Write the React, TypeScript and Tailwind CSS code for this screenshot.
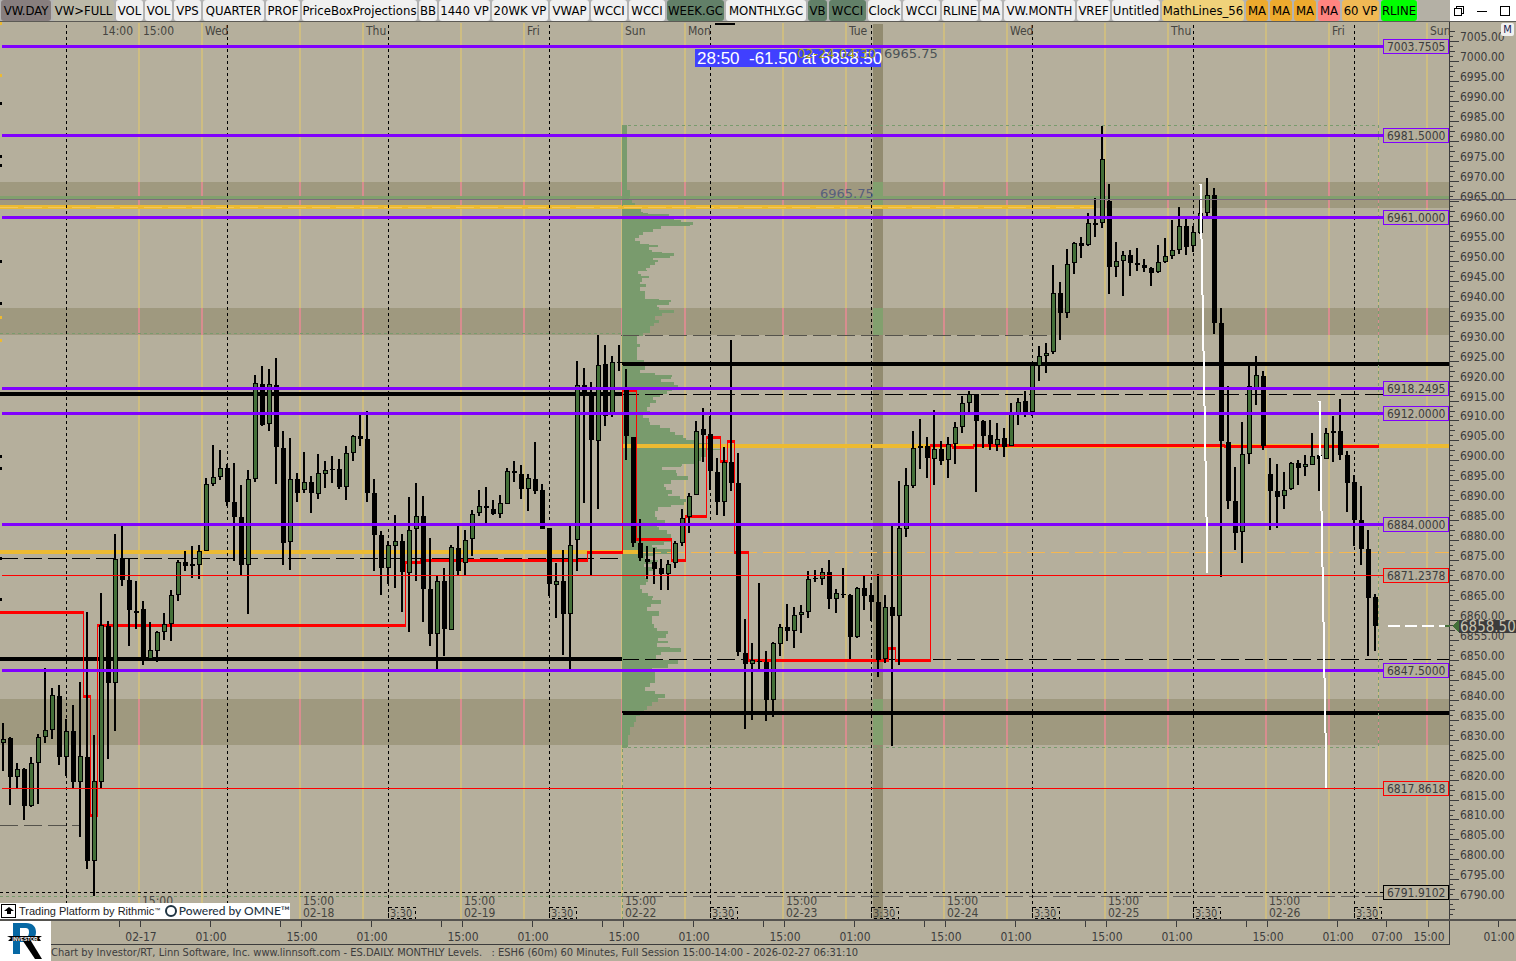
import classNames from "clsx";

const PLOT_RIGHT = 1449;
const DAY_WIDTH = 161;
const FONT = "font-['DejaVu_Sans_Condensed','DejaVu_Sans',sans-serif]";

interface Tab {
  name: string;
  width: string;
  color?: string;
}

const TABS: Tab[] = [
  { name: "VW.DAY", width: "w-[50px]", color: "bg-[#877e7e]" },
  { name: "VW>FULL", width: "w-[61px]", color: "bg-[#bbb9a8]" },
  { name: "VOL", width: "w-[27px]" },
  { name: "VOL", width: "w-[27px]" },
  { name: "VPS", width: "w-[27px]" },
  { name: "QUARTER", width: "w-[61px]" },
  { name: "PROF", width: "w-[34px]" },
  { name: "PriceBoxProjections", width: "w-[115px]" },
  { name: "BB", width: "w-[18px]" },
  { name: "1440 VP", width: "w-[51px]" },
  { name: "20WK VP", width: "w-[56px]" },
  { name: "VWAP", width: "w-[39px]" },
  { name: "WCCI", width: "w-[36px]" },
  { name: "WCCI", width: "w-[36px]" },
  { name: "WEEK.GC", width: "w-[57px]", color: "bg-[#628068]" },
  { name: "MONTHLY.GC", width: "w-[80px]" },
  { name: "VB", width: "w-[19px]", color: "bg-[#628068]" },
  { name: "WCCI", width: "w-[37px]", color: "bg-[#628068]" },
  { name: "Clock", width: "w-[33px]" },
  { name: "WCCI", width: "w-[37px]" },
  { name: "RLINE", width: "w-[36px]" },
  { name: "MA", width: "w-[22px]" },
  { name: "VW.MONTH", width: "w-[71px]" },
  { name: "VREF", width: "w-[33px]" },
  { name: "Untitled", width: "w-[48px]" },
  { name: "MathLines_56", width: "w-[82px]", color: "bg-[#f0d27a]" },
  { name: "MA", width: "w-[22px]", color: "bg-[#edaa2e]" },
  { name: "MA", width: "w-[22px]", color: "bg-[#edaa2e]" },
  { name: "MA", width: "w-[22px]", color: "bg-[#edaa2e]" },
  { name: "MA", width: "w-[22px]", color: "bg-[#ff8480]" },
  { name: "60 VP", width: "w-[37px]", color: "bg-[#f0b955]" },
  { name: "RLINE", width: "w-[36px]", color: "bg-[#00ff00]" },
];

// high, low, body top, body bottom, 1 when the bar closed up
const CANDLES = [
  [723, 771, 739, 743, 1], [737, 805, 738, 777, 0], [763, 788, 769, 777, 1], [768, 820, 769, 806, 0],
  [757, 807, 763, 806, 1], [734, 804, 737, 763, 1], [668, 743, 730, 737, 1], [688, 739, 695, 730, 1],
  [685, 765, 696, 757, 0], [719, 776, 731, 757, 1], [705, 788, 731, 782, 0], [682, 837, 756, 782, 1],
  [612, 869, 757, 861, 0], [735, 896, 781, 861, 1], [593, 788, 625, 782, 1], [621, 759, 626, 683, 0],
  [534, 731, 559, 683, 1], [525, 586, 558, 580, 0], [558, 646, 580, 610, 0], [581, 629, 611, 613, 0],
  [601, 665, 609, 660, 0], [622, 659, 650, 659, 1], [631, 662, 632, 651, 1], [613, 640, 624, 632, 1],
  [590, 641, 595, 624, 1], [560, 601, 562, 595, 1], [551, 571, 562, 566, 0], [546, 578, 564, 566, 0],
  [545, 579, 551, 565, 1], [478, 551, 484, 551, 1], [445, 486, 477, 484, 1], [450, 480, 468, 477, 1],
  [464, 506, 468, 502, 0], [463, 561, 502, 517, 0], [485, 575, 517, 565, 0], [470, 614, 479, 565, 1],
  [375, 482, 383, 479, 1], [366, 426, 384, 425, 0], [369, 431, 384, 424, 1], [358, 484, 385, 447, 0],
  [431, 565, 448, 543, 0], [438, 570, 479, 542, 1], [473, 502, 479, 493, 0], [452, 493, 482, 490, 1],
  [476, 513, 482, 493, 0], [454, 499, 473, 494, 1], [461, 488, 470, 474, 1], [456, 483, 469, 470, 0],
  [459, 489, 469, 487, 0], [446, 500, 453, 487, 1], [435, 461, 436, 453, 1], [414, 446, 436, 439, 0],
  [411, 502, 439, 493, 0], [479, 571, 493, 535, 0], [531, 595, 535, 568, 0], [541, 584, 545, 568, 1],
  [515, 588, 541, 546, 1], [534, 612, 541, 572, 0], [497, 632, 530, 573, 1], [483, 581, 516, 529, 1],
  [496, 622, 516, 589, 0], [538, 646, 589, 634, 0], [576, 669, 581, 634, 1], [568, 656, 581, 629, 0],
  [545, 630, 547, 630, 1], [525, 575, 548, 571, 0], [530, 575, 540, 563, 1], [510, 556, 514, 539, 1],
  [490, 516, 506, 513, 1], [487, 524, 506, 508, 0], [500, 515, 509, 514, 0], [495, 518, 503, 514, 1],
  [468, 504, 471, 504, 1], [461, 482, 471, 473, 0], [465, 499, 474, 489, 0], [474, 511, 478, 489, 1],
  [442, 494, 479, 491, 0], [484, 529, 490, 529, 0], [528, 596, 528, 584, 0], [563, 618, 581, 585, 1],
  [550, 655, 581, 614, 0], [525, 670, 545, 614, 1], [361, 571, 385, 540, 1], [368, 503, 385, 396, 0],
  [382, 576, 396, 440, 0], [335, 509, 365, 441, 1], [345, 426, 364, 416, 0], [356, 417, 362, 413, 1],
  [345, 371, 362, 363, 0], [369, 460, 389, 436, 0], [437, 547, 437, 543, 0], [519, 561, 543, 558, 0],
  [546, 579, 559, 562, 0], [548, 584, 562, 569, 0], [559, 590, 568, 574, 0], [560, 590, 564, 574, 1],
  [541, 568, 543, 563, 1], [509, 546, 518, 543, 1], [493, 533, 496, 517, 1], [421, 495, 431, 495, 1],
  [408, 462, 429, 435, 0], [416, 490, 434, 471, 0], [458, 515, 472, 502, 0], [447, 516, 462, 502, 1],
  [340, 491, 462, 483, 0], [453, 656, 483, 652, 0], [619, 729, 653, 664, 0], [643, 720, 660, 664, 1],
  [583, 670, 661, 662, 0], [651, 721, 662, 700, 0], [642, 717, 643, 700, 1], [624, 656, 627, 644, 1],
  [604, 641, 627, 631, 0], [607, 648, 615, 631, 1], [605, 633, 612, 615, 1], [571, 618, 579, 612, 1],
  [570, 582, 578, 579, 0], [568, 585, 572, 579, 1], [560, 609, 572, 599, 0], [589, 613, 593, 599, 1],
  [568, 598, 594, 595, 0], [594, 659, 595, 637, 0], [587, 638, 588, 637, 1], [576, 610, 588, 596, 0],
  [583, 621, 595, 602, 0], [574, 677, 602, 660, 0], [595, 663, 607, 659, 1], [525, 746, 607, 616, 0],
  [481, 665, 528, 616, 1], [468, 537, 485, 529, 1], [431, 488, 448, 486, 1], [419, 469, 446, 448, 0],
  [437, 478, 446, 458, 0], [410, 485, 449, 459, 1], [441, 465, 449, 461, 0], [437, 478, 444, 460, 1],
  [422, 464, 427, 444, 1], [396, 433, 403, 427, 1], [391, 414, 394, 403, 1], [394, 492, 394, 421, 0],
  [420, 448, 421, 436, 0], [420, 450, 435, 444, 0], [423, 451, 439, 445, 1], [428, 457, 438, 447, 0],
  [403, 446, 414, 446, 1], [398, 425, 402, 414, 1], [391, 417, 401, 412, 0], [363, 416, 365, 412, 1],
  [346, 381, 356, 366, 1], [343, 373, 353, 356, 1], [265, 354, 293, 352, 1], [282, 340, 293, 313, 0],
  [249, 318, 264, 313, 1], [242, 274, 243, 263, 1], [237, 258, 243, 246, 0], [213, 246, 223, 245, 1],
  [198, 237, 223, 225, 0], [126, 228, 159, 223, 1], [184, 294, 201, 267, 0], [242, 277, 261, 267, 1],
  [251, 296, 255, 261, 1], [250, 276, 255, 263, 0], [248, 271, 263, 265, 0], [259, 272, 265, 268, 0],
  [267, 286, 268, 273, 0], [245, 273, 262, 272, 1], [238, 263, 256, 262, 1], [220, 259, 250, 256, 1],
  [207, 254, 226, 250, 1], [219, 255, 226, 247, 0], [226, 252, 232, 246, 1], [200, 234, 213, 233, 1],
  [178, 216, 195, 213, 1], [188, 334, 195, 323, 0], [308, 577, 323, 441, 0], [386, 509, 442, 501, 0],
  [467, 550, 501, 533, 0], [422, 563, 454, 532, 1], [365, 464, 386, 454, 1], [356, 405, 375, 389, 1],
  [371, 450, 376, 446, 0], [458, 530, 474, 491, 0], [464, 528, 491, 497, 0], [472, 509, 490, 496, 1],
  [462, 490, 463, 489, 1], [460, 485, 463, 468, 0], [455, 476, 464, 467, 1], [433, 465, 456, 465, 1],
  [455, 491, 455, 459, 0], [428, 459, 433, 459, 1], [416, 462, 431, 433, 0], [399, 460, 431, 455, 0],
  [451, 512, 455, 483, 0], [475, 546, 482, 520, 0], [486, 565, 520, 549, 0], [530, 656, 549, 598, 0],
  [594, 651, 597, 626, 0],
];

// y, right edge of the volume profile
const PROFILE = [
  [125, 627], [189, 627], [190, 630], [198, 629], [200, 632], [203, 635], [207, 637], [209, 641], [212, 643],
  [213, 648], [214, 669], [216, 669], [217, 674], [220, 681], [222, 693], [224, 693], [225, 690], [226, 661],
  [229, 653], [232, 643], [235, 639], [238, 635], [241, 640], [244, 649], [245, 658], [246, 658], [247, 649],
  [250, 652], [252, 662], [253, 674], [255, 674], [256, 670], [258, 653], [260, 658], [262, 655], [265, 650],
  [268, 646], [270, 647], [271, 638], [274, 641], [276, 649], [278, 642], [282, 640], [284, 646], [287, 640],
  [291, 645], [297, 645], [299, 659], [300, 671], [302, 669], [305, 657], [307, 659], [310, 674], [311, 674],
  [313, 662], [316, 655], [320, 659], [323, 654], [326, 650], [330, 650], [333, 643], [336, 637], [342, 637],
  [344, 640], [347, 637], [355, 637], [360, 644], [365, 645], [370, 640], [373, 655], [375, 672], [377, 671],
  [379, 661], [382, 674], [385, 678], [389, 672], [391, 667], [394, 660], [397, 653], [400, 656], [403, 650],
  [407, 647], [411, 650], [415, 643], [418, 649], [422, 650], [425, 660], [428, 670], [432, 675], [435, 683],
  [438, 686], [440, 695], [443, 712], [449, 720], [450, 706], [454, 706], [457, 701], [461, 699], [464, 682],
  [466, 681], [467, 662], [470, 676], [473, 677], [476, 688], [478, 688], [480, 671], [484, 664], [487, 666],
  [490, 672], [494, 668], [496, 680], [499, 686], [502, 684], [505, 671], [507, 658], [511, 655], [517, 657],
  [520, 665], [523, 657], [527, 659], [530, 667], [534, 671], [538, 671], [542, 664], [545, 652], [547, 657],
  [549, 671], [551, 671], [554, 655], [556, 645], [560, 658], [562, 652], [564, 644], [567, 653], [571, 649],
  [575, 645], [578, 648], [582, 646], [585, 640], [589, 642], [593, 648], [596, 653], [598, 652], [600, 661],
  [604, 651], [607, 647], [611, 659], [616, 652], [620, 652], [624, 654], [628, 657], [631, 668], [634, 666],
  [638, 658], [641, 668], [643, 657], [647, 670], [648, 681], [650, 681], [652, 661], [655, 656], [660, 678],
  [664, 668], [668, 652], [672, 655], [677, 655], [683, 650], [687, 645], [691, 655], [694, 665], [698, 658],
  [702, 652], [706, 647], [710, 644], [714, 640], [716, 636], [722, 634], [727, 630], [735, 628], [747, 627],
];

const BANDS = [
  [182, 26],
  [308, 27],
  [699, 46],
];

// start x, end x, y
const RED_STEPS = [
  [0, 83, 612], [83, 90, 696], [90, 97, 815], [97, 405, 625], [405, 420, 562], [420, 587, 560],
  [587, 622, 552], [622, 636, 390], [636, 671, 539], [671, 685, 560], [685, 706, 516], [706, 720, 437],
  [720, 727, 461], [727, 734, 441], [734, 748, 552], [748, 888, 660], [888, 895, 648], [895, 930, 660],
  [930, 952, 445], [952, 973, 447], [973, 1224, 445], [1224, 1378, 446],
];

const LEVELS = [
  { price: "7003.7505", y: 46, color: "#8000ff" },
  { price: "6981.5000", y: 135, color: "#8000ff" },
  { price: "6961.0000", y: 217, color: "#8000ff" },
  { price: "6918.2495", y: 388, color: "#8000ff" },
  { price: "6912.0000", y: 413, color: "#8000ff" },
  { price: "6884.0000", y: 524, color: "#8000ff" },
  { price: "6847.5000", y: 670, color: "#8000ff" },
  { price: "6871.2378", y: 575, color: "#ff0000" },
  { price: "6817.8618", y: 788, color: "#ff0000" },
  { price: "6791.9102", y: 892, color: "#000000" },
];

const TOP_LABELS: [number, string][] = [
  [102, "14:00"], [143, "15:00"], [205, "Wed"], [366, "Thu"], [527, "Fri"], [625, "Sun"],
  [688, "Mon"], [849, "Tue"], [1010, "Wed"], [1171, "Thu"], [1332, "Fri"], [1430, "Sun"],
];

const DATES = ["02-17", "02-18", "02-19", "02-22", "02-23", "02-24", "02-25", "02-26"];

const SESSION_LINES = Array.from({ length: 9 }, (_, i) => 139 + i * DAY_WIDTH);
const MIDNIGHT_LINES = Array.from({ length: 8 }, (_, i) => 202 + i * DAY_WIDTH);
const OPEN_LINES = Array.from({ length: 9 }, (_, i) => 66 + i * DAY_WIDTH);

function priceToY(price: number) {
  return Math.floor(217.5 + (6961 - price) * 3.99);
}

function HLine({
  y,
  from,
  to,
  color,
  width = 1,
  dash,
}: {
  y: number;
  from: number;
  to: number;
  color: string;
  width?: number;
  dash?: string;
}) {
  const offset = width % 2 ? 0.5 : 0;
  return (
    <line
      x1={from}
      x2={to}
      y1={y + offset}
      y2={y + offset}
      stroke={color}
      strokeWidth={width}
      strokeDasharray={dash}
    />
  );
}

function Background() {
  const verticals = [...SESSION_LINES, ...MIDNIGHT_LINES];
  return (
    <g>
      {verticals.map((x) => (
        <rect key={x} x={x - 1} y={23} width={2} height={896} fill="#cebd82" />
      ))}
      <rect x={1378} y={23} width={1} height={896} fill="#cebd82" />
      <rect x={873} y={24} width={10} height={895} fill="#928b70" />
      {BANDS.map(([y, height]) => (
        <g key={y}>
          <rect x={0} y={y} width={PLOT_RIGHT} height={height} fill="#9f997f" />
          {verticals.map((x) => (
            <rect key={x} x={x - 1} y={y} width={2} height={height} fill="#d88d8f" />
          ))}
          <rect x={1378} y={y} width={1} height={height} fill="#d88d8f" />
          <rect x={873} y={y} width={10} height={height} fill="#82a06e" />
        </g>
      ))}
      <rect x={0} y={196} width={PLOT_RIGHT} height={3} fill="#82a06e" />
    </g>
  );
}

function VolumeProfile() {
  let path = "M622 125";
  PROFILE.forEach(([y, x]) => {
    path += `V${y}H${x}`;
  });
  return <path d={`${path}V748H622Z`} fill="#799b6d" />;
}

function HorizontalLevels() {
  return (
    <g>
      <HLine y={207} from={0} to={1094} color="#ecba32" width={4} />
      <HLine y={207} from={0} to={1094} color="#f3c85c" dash="18 6" />
      <HLine y={552} from={0} to={638} color="#ecba32" width={4} />
      <HLine y={446} from={622} to={PLOT_RIGHT} color="#ecba32" width={4} />
      <HLine y={552} from={643} to={PLOT_RIGHT} color="#f5b750" dash="18 6" />
      <HLine y={394} from={0} to={622} color="#000" width={4} />
      <HLine y={659} from={0} to={622} color="#000" width={4} />
      <HLine y={364} from={622} to={PLOT_RIGHT} color="#000" width={4} />
      <HLine y={713} from={622} to={PLOT_RIGHT} color="#000" width={4} />
      <HLine y={558} from={0} to={618} color="#000" dash="18 6" />
      <HLine y={394} from={621} to={PLOT_RIGHT} color="#000" dash="18 6" />
      <HLine y={659} from={621} to={PLOT_RIGHT} color="#000" dash="18 6" />
      <HLine y={335} from={621} to={1047} color="#55534c" dash="18 6" />
      <HLine y={825} from={0} to={80} color="#55534c" dash="18 6" />
      <HLine y={896} from={621} to={1383} color="#66645f" dash="18 6" />
      <HLine y={333} from={0} to={622} color="#799b6d" dash="3 3" />
      <HLine y={896} from={0} to={622} color="#799b6d" dash="3 3" />
      <HLine y={125} from={622} to={1378} color="#799b6d" dash="3 3" />
      <HLine y={747} from={622} to={1378} color="#799b6d" dash="3 3" />
      <HLine y={892} from={0} to={1383} color="#000" dash="3 3" />
      <path d="M1378.5 125V747M622.5 125V919" stroke="#799b6d" strokeDasharray="3 3" />
    </g>
  );
}

function RedSteps() {
  return (
    <g>
      {RED_STEPS.map(([from, to, y], i) => (
        <g key={from}>
          <HLine y={y} from={from} to={to + 1} color="#ff0000" width={3} />
          {i > 0 ? (
            <line
              x1={from + 0.5}
              x2={from + 0.5}
              y1={RED_STEPS[i - 1][2]}
              y2={y}
              stroke="#ff0000"
            />
          ) : null}
        </g>
      ))}
    </g>
  );
}

function Candles() {
  return (
    <g>
      {CANDLES.map(([high, low, top, bottom, up], i) => {
        const x = 3 + i * 7;
        return (
          <g key={x}>
            <rect x={x - 1} y={high} width={2} height={low - high} />
            <rect x={x - 2} y={top} width={5} height={bottom - top} />
            {up ? (
              <rect x={x - 1} y={top + 1} width={3} height={bottom - top - 2} fill="#447039" />
            ) : null}
          </g>
        );
      })}
    </g>
  );
}

function EdgeMarks() {
  return (
    <g>
      {[103, 156, 165, 261, 303, 456, 468, 558, 599].map((y) => (
        <rect key={y} x={0} y={y - 1} width={2} height={3} fill="#000" />
      ))}
      {[24, 76, 318, 341].map((y) => (
        <rect key={y} x={0} y={y - 2} width={2} height={3} fill="#ecba32" />
      ))}
    </g>
  );
}

function PriceScale() {
  const ticks = [];
  for (let price = 6786.25; price <= 7008; price += 1.25) {
    const length = price % 5 === 0 ? 9 : price % 2.5 === 0 ? 5 : 3;
    ticks.push({ price, length });
  }
  return (
    <g>
      {ticks.map(({ price, length }) => (
        <HLine
          key={price}
          y={priceToY(price)}
          from={1450}
          to={1450 + length}
          color="#3c3c3c"
        />
      ))}
      <line x1={1449.5} x2={1449.5} y1={22} y2={919} stroke="#3c3c3c" />
      {ticks
        .filter(({ price }) => price % 5 === 0)
        .map(({ price }) => (
          <text key={price} x={1460} y={priceToY(price)} fill="#3c3c3c">
            {price.toFixed(2)}
          </text>
        ))}
    </g>
  );
}

function Chart() {
  return (
    <svg
      viewBox="0 22 1516 897"
      className={classNames("block h-auto w-full text-[12px]", FONT)}
      shapeRendering="crispEdges"
    >
      <Background />
      <VolumeProfile />
      <HorizontalLevels />
      {OPEN_LINES.map((x) => (
        <line
          key={x}
          x1={x + 0.5}
          x2={x + 0.5}
          y1={25}
          y2={919}
          stroke="#000"
          strokeDasharray="3 3"
        />
      ))}
      <RedSteps />
      <Candles />
      <EdgeMarks />
      <rect x={715} y={23} width={20} height={2} />

      {LEVELS.filter(({ color }) => color !== "#000000").map(({ price, y, color }) => (
        <HLine
          key={price}
          y={y}
          from={2}
          to={1383}
          color={color}
          width={color === "#ff0000" ? 1 : 3}
        />
      ))}

      <g fill="none" stroke="#fff" strokeWidth={2}>
        <path d="M1199 184.5H1201" strokeWidth={1} />
        <path d="M1201 184V239M1202 239V295M1203 295V351M1204 351V406M1205 406V461M1206 461V517M1207 517V573" />
        <path d="M1318 401.5H1320" strokeWidth={1} />
        <path d="M1320 401V456M1321 456V511M1322 511V567M1323 567V622M1324 622V678M1325 678V733M1326 733V788" />
      </g>

      <g fill="#464540">
        {TOP_LABELS.map(([x, label]) => (
          <text key={x} x={x} y={35}>
            {label}
          </text>
        ))}
        {DATES.map((date, i) => (
          <g key={date}>
            <text x={142 + i * DAY_WIDTH} y={905}>
              15:00
            </text>
            <text x={142 + i * DAY_WIDTH} y={917}>
              {date}
            </text>
          </g>
        ))}
      </g>
      {OPEN_LINES.slice(2).map((x) => (
        <g key={x}>
          <rect
            x={x + 0.5}
            y={907.5}
            width={27}
            height={11}
            fill="none"
            stroke="#000"
            strokeDasharray="3 3"
          />
          <text x={x + 2} y={917} fill="#464540" className="text-[11px]">
            3:30
          </text>
        </g>
      ))}

      <rect x={695} y={49} width={186} height={18} fill="#4040ff" />
      <text
        x={697}
        y={64}
        fill="#fff"
        className="font-['Liberation_Sans',sans-serif] text-[17px] whitespace-pre"
      >
        {"28:50  -61.50 at 6858.50"}
      </text>
      <g className="font-['DejaVu_Sans',sans-serif] text-[13px]">
        <text x={797} y={58} fill="#a8a010">
          02-24 04:30
        </text>
        <text x={884} y={58} fill="#4b5357">
          6965.75
        </text>
        <text x={820} y={198} fill="#57607c">
          6965.75
        </text>
      </g>

      <rect x={1450} y={22} width={66} height={897} fill="#b5af9c" />
      <PriceScale />
      <HLine y={199} from={0} to={PLOT_RIGHT} color="#7c6a7c" />
      <HLine y={199} from={1450} to={1516} color="#5a5560" />
      {LEVELS.map(({ price, y, color }) => (
        <g key={price}>
          <rect
            x={1383.5}
            y={y - 6.5}
            width={65}
            height={14}
            fill="#b5af9c"
            stroke={color}
          />
          <text x={1387} y={y + 5} fill="#3c3c3c">
            {price}
          </text>
        </g>
      ))}

      <HLine y={626} from={1388} to={1445} color="#fff" width={2} dash="12 5" />
      <HLine y={626} from={1445} to={1450} color="#447039" width={2} />
      <path d="M1452 626L1459 619V633Z" fill="#447039" />
      <rect x={1459} y={620} width={57} height={13} fill="#3c3c3c" />
      <text x={1460} y={632} fill="#c8c3b0" className="text-[15px]">
        6858.50
      </text>
    </svg>
  );
}

function TimeScale() {
  const ticks: { x: number; label?: string }[] = [];
  for (let i = 0; i < 9; i++) {
    const start = i * DAY_WIDTH;
    if (i < 8) ticks.push({ x: 119 + start });
    ticks.push({ x: 140 + start, label: i === 0 ? "02-17" : "15:00" });
    ticks.push({ x: 210 + start, label: "01:00" });
  }
  ticks.push({ x: 1386, label: "07:00" });
  return (
    <svg
      viewBox="51 921 1465 24"
      className={classNames("block h-auto w-full text-[12px]", FONT)}
      shapeRendering="crispEdges"
    >
      {ticks.map(({ x, label }) => (
        <g key={x}>
          <line x1={x + 0.5} x2={x + 0.5} y1={921} y2={927} stroke="#3c3c3c" />
          {label ? (
            <text x={x + 1} y={941} textAnchor="middle" fill="#3c3c3c">
              {label}
            </text>
          ) : null}
        </g>
      ))}
      <path d="M51 944.5H1449.5V921" fill="none" stroke="#3c3c3c" />
    </svg>
  );
}

function Toolbar() {
  return (
    <header className="flex h-[22px] items-stretch justify-between border-b border-[#5c5a55] bg-[#b4b0a5]">
      <nav className="flex gap-[2px] bg-[#b4b4b4] px-px">
        {TABS.map(({ name, width, color = "bg-[#f0f0f0]" }, i) => (
          <button
            key={i}
            type="button"
            className={classNames(
              "flex shrink-0 items-center justify-center rounded-[3px] text-[13px] leading-4 whitespace-nowrap text-black",
              width,
              color
            )}
          >
            {name}
          </button>
        ))}
      </nav>
      <div className="flex w-[66px] shrink-0 items-center justify-between bg-white pr-[5px] pl-[3px]">
        <button type="button" aria-label="Restore">
          <svg width="12" height="12" fill="none" stroke="#000" shapeRendering="crispEdges">
            <path d="M1.5 3.5H8.5V10.5H1.5ZM3.5 3.5V1.5H10.5V8.5H8.5" />
          </svg>
        </button>
        <button type="button" aria-label="Minimize">
          <svg width="12" height="12" stroke="#000" shapeRendering="crispEdges">
            <path d="M1 6.5H11" />
          </svg>
        </button>
        <button type="button" aria-label="Maximize">
          <svg width="12" height="12" fill="none" stroke="#000" shapeRendering="crispEdges">
            <path d="M1.5 1.5H10.5V10.5H1.5Z" />
          </svg>
        </button>
      </div>
    </header>
  );
}

function RithmicBadge() {
  return (
    <div className="absolute bottom-0 left-0 flex h-4 w-[290px] items-center bg-white whitespace-nowrap">
      <svg width="17" height="16" className="shrink-0">
        <rect x="1.5" y="1.5" width="14" height="13" fill="none" stroke="#000" />
        <path d="M9 4L14 8H11V11H7V8H4Z" />
      </svg>
      <span className="ml-[2px] font-['Liberation_Sans',sans-serif] text-[11px] leading-4 text-[#222]">
        Trading Platform by Rithmic
        <sup className="text-[6px]">™</sup>
      </span>
      <svg width="14" height="14" className="ml-auto shrink-0">
        <circle cx="7" cy="7" r="5" fill="none" stroke="#1f3442" strokeWidth="2" />
      </svg>
      <span className="ml-px font-['Lato',sans-serif] text-[12px] leading-4 font-medium text-[#1f3442]">
        Powered by OMNE™
      </span>
    </div>
  );
}

function Logo() {
  return (
    <svg width="51" height="40" viewBox="0 0 51 40" className="shrink-0 bg-white">
      <path
        d="M13 2H26C33 2 36 6 36 11C36 17 32 21 25 21H20V33H13ZM20 7V16H25C28 16 29 14 29 11C29 8 28 7 25 7Z"
        fill="#0668a4"
        fillRule="evenodd"
      />
      <path d="M23 20H31L42 38H35Z" />
      <path d="M7 15H42L39 17L41 20H8L11 17Z" />
      <text
        x="25"
        y="20"
        textAnchor="middle"
        fill="#fff"
        className="font-['Liberation_Sans',sans-serif] text-[5px] font-bold"
      >
        INVESTOR
      </text>
    </svg>
  );
}

export default function App() {
  return (
    <div className={classNames("flex min-h-screen flex-col overflow-hidden bg-[#b5af9c]", FONT)}>
      <Toolbar />
      <main className="relative">
        <Chart />
        <RithmicBadge />
        <button
          type="button"
          className="absolute top-px right-[2px] h-[13px] w-[13px] rounded-[2px] bg-[#f0f0f0] text-center text-[11px] leading-[13px] text-[#1b2350]"
        >
          M
        </button>
      </main>
      <footer className="flex border-t-2 border-[#55534f]">
        <Logo />
        <div className="min-w-0 flex-1">
          <TimeScale />
          <p className="text-[11px] leading-4 whitespace-pre text-[#3c3c3c]">
            {
              "Chart by Investor/RT, Linn Software, Inc. www.linnsoft.com - ES.DAILY. MONTHLY Levels.   : ESH6 (60m) 60 Minutes, Full Session 15:00-14:00 - 2026-02-27 06:31:10"
            }
          </p>
        </div>
      </footer>
    </div>
  );
}
